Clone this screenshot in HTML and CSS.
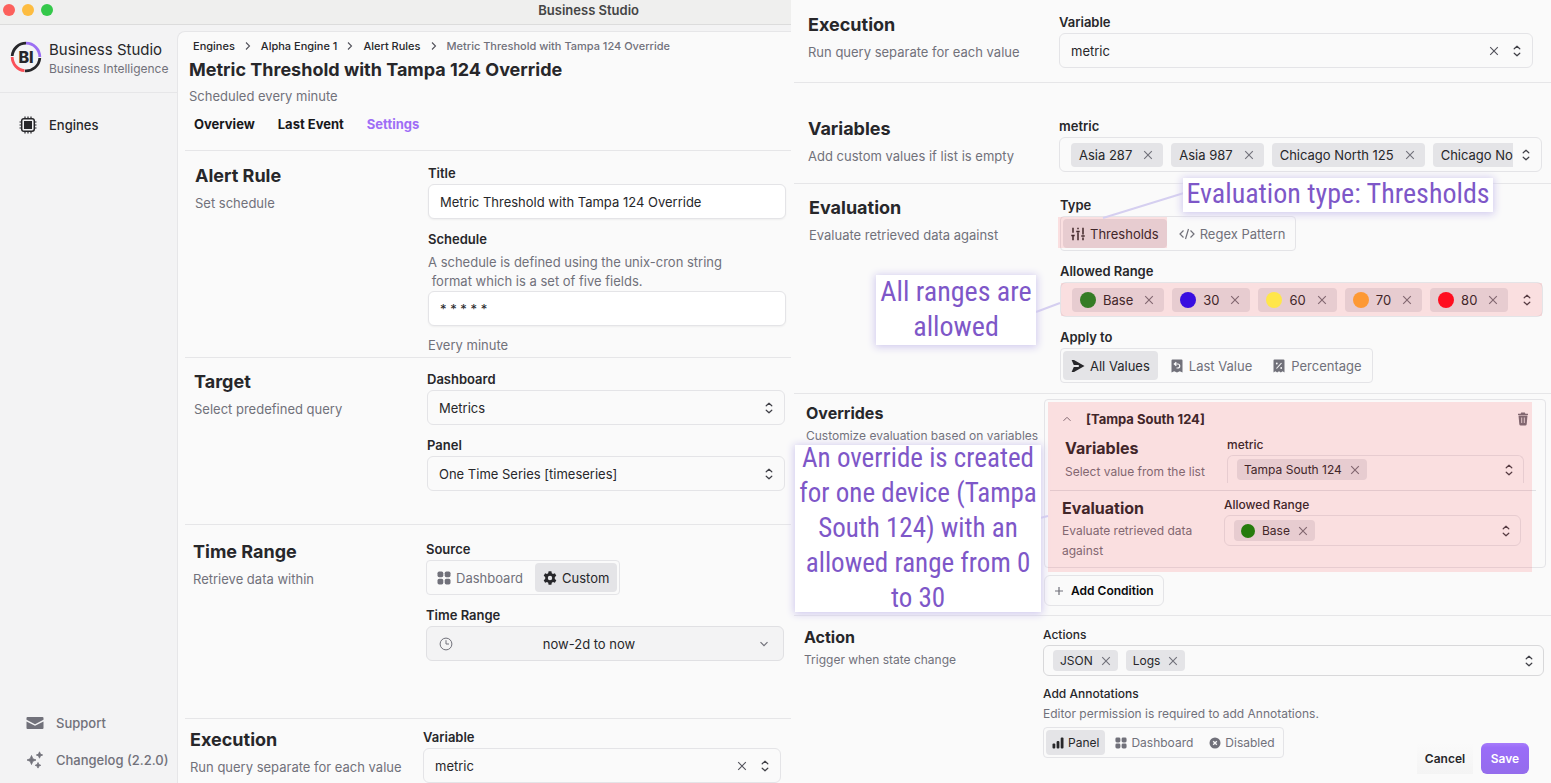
FILE: index.html
```html
<!DOCTYPE html>
<html lang="en">
<head>
<meta charset="utf-8">
<title>Business Studio</title>
<link rel="stylesheet" href="styles.css">
</head>
<body>
<svg class="defs" aria-hidden="true">
  <symbol id="updown" viewBox="0 0 10 14"><path d="M2.200 4.800 5 2.200l2.800 2.600M2.200 9.200 5 11.800l2.800-2.600" fill="none" stroke="#3f3f46" stroke-width="1.200" stroke-linecap="round" stroke-linejoin="round"/></symbol>
  <symbol id="x" viewBox="0 0 10 10"><path d="M1.200 1.200l7.600 7.600M8.800 1.200L1.200 8.800" fill="none" stroke="currentColor" stroke-width="1.100"/></symbol>
  <symbol id="right" viewBox="0 0 8 10"><path d="M2 1.500 5.500 5 2 8.500" fill="none" stroke="#52525b" stroke-width="1.100"/></symbol>
  <symbol id="grid" viewBox="0 0 14 14"><g fill="currentColor"><rect x=".5" y=".5" width="5.800" height="5.800" rx="1.700"/><rect x="7.700" y=".5" width="5.800" height="5.800" rx="1.700"/><rect x=".5" y="7.700" width="5.800" height="5.800" rx="1.700"/><rect x="7.700" y="7.700" width="5.800" height="5.800" rx="1.700"/></g></symbol>
</svg>
<div class="page">
  <div class="left">
    <header class="titlebar">
      <span class="dot red"></span><span class="dot amber"></span><span class="dot green"></span>
      <strong class="window-title">Business Studio</strong>
    </header>
    <div class="app">
      <aside class="sidebar">
        <div class="brand">
          <svg class="logo" viewBox="0 0 32 32"><g fill="none" stroke-width="2.800"><path d="M16 2.200A13.800 13.800 0 0 1 29.800 16" stroke="#9b6ef3"/><path d="M29.800 17A13.800 13.800 0 0 1 15 29.800" stroke="#27272a"/><path d="M14.500 29.700A13.800 13.800 0 0 1 2.200 16" stroke="#fb5058"/><path d="M2.200 15A13.800 13.800 0 0 1 16 2.200" stroke="#27272a"/></g><text x="16" y="22" text-anchor="middle" class="logo-text">BI</text></svg>
          <div class="brand-text"><div class="brand-name">Business Studio</div><div class="brand-sub">Business Intelligence</div></div>
        </div>
        <nav class="nav">
          <a href="#engines"><svg class="i18" viewBox="0 0 18 18"><path d="M6 .5V3M9 .5V3M12 .5V3M6 15v2.500M9 15v2.500M12 15v2.500M.5 6H3M.5 9H3M.5 12H3M15 6h2.500M15 9h2.500M15 12h2.500" stroke="#27272a" stroke-width="1.200"/><rect x="2.700" y="2.700" width="12.600" height="12.600" rx="2.200" fill="none" stroke="#27272a" stroke-width="1.500"/><rect x="5" y="5" width="8" height="8" fill="#27272a"/></svg>Engines</a>
        </nav>
        <nav class="nav-bottom">
          <a href="#support"><svg class="i18" viewBox="0 0 18 18"><path d="M1.500 3h15a1 1 0 0 1 1 1v1.800L9 10.200.5 5.800V4a1 1 0 0 1 1-1z" fill="#71717a"/><path d="M.5 7.400 9 11.800l8.500-4.400V14a1 1 0 0 1-1 1h-15a1 1 0 0 1-1-1z" fill="#71717a"/></svg>Support</a>
          <a href="#changelog"><svg class="i18" viewBox="0 0 18 18"><g fill="#71717a" stroke="#71717a" stroke-linejoin="round" stroke-width=".8"><path d="M5.500 4.500l1.300 3.200L10 9l-3.200 1.300-1.300 3.200-1.300-3.200L1 9l3.200-1.300z"/><path d="M13.500.8l.9 2.300 2.300.9-2.300.9-.9 2.300-.9-2.300-2.300-.9 2.300-.9zM12 11.500l.8 2 2 .8-2 .8-.8 2-.8-2-2-.8 2-.8z"/></g></svg>Changelog (2.2.0)</a>
        </nav>
      </aside>
      <main class="main">
        <div class="head">
          <nav class="crumbs" aria-label="Breadcrumb"><a href="#e">Engines</a><svg class="sep"><use href="#right"/></svg><a href="#a">Alpha Engine 1</a><svg class="sep"><use href="#right"/></svg><a href="#r">Alert Rules</a><svg class="sep"><use href="#right"/></svg><span>Metric Threshold with Tampa 124 Override</span></nav>
          <h1>Metric Threshold with Tampa 124 Override</h1>
          <p class="sub">Scheduled every minute</p>
          <nav class="tabs"><a href="#o">Overview</a><a href="#l">Last Event</a><a href="#s" class="active">Settings</a></nav>
        </div>
        <section class="row alert">
          <div><h2>Alert Rule</h2><p class="sub">Set schedule</p></div>
          <div>
            <label for="title">Title</label>
            <input id="title" class="box text" value="Metric Threshold with Tampa 124 Override">
            <label for="cron" class="next">Schedule</label>
            <p class="hint">A schedule is defined using the unix-cron string<br>&nbsp;format which is a set of five fields.</p>
            <input id="cron" class="box text" value="* * * * *">
            <p class="note">Every minute</p>
          </div>
        </section>
        <section class="row target">
          <div><h2>Target</h2><p class="sub">Select predefined query</p></div>
          <div>
            <label for="dash">Dashboard</label>
            <div class="box"><select id="dash"><option>Metrics</option></select><svg class="ud"><use href="#updown"/></svg></div>
            <label for="panel" class="next">Panel</label>
            <div class="box"><select id="panel"><option>One Time Series [timeseries]</option></select><svg class="ud"><use href="#updown"/></svg></div>
          </div>
        </section>
        <section class="row time">
          <div><h2>Time Range</h2><p class="sub">Retrieve data within</p></div>
          <div>
            <span class="label" id="src">Source</span>
            <div class="seg" role="group" aria-labelledby="src"><button><svg class="i14"><use href="#grid"/></svg>Dashboard</button><button class="on"><svg class="i14" viewBox="0 0 14 14"><path fill="currentColor" fill-rule="evenodd" d="M5.600.3h2.800l.4 1.900 1.200.7 1.900-.6 1.400 2.400-1.500 1.300v2l1.500 1.300-1.400 2.400-1.900-.6-1.200.7-.4 1.900H5.600l-.4-1.900-1.200-.7-1.900.6L.7 9.300 2.200 8V6L.7 4.700l1.400-2.400 1.900.6 1.200-.7zM7 4.800a2.200 2.200 0 1 0 0 4.400 2.200 2.200 0 0 0 0-4.400z"/></svg>Custom</button></div>
            <label for="range" class="next">Time Range</label>
            <button id="range" class="box range"><svg class="i14" viewBox="0 0 14 14"><circle cx="7" cy="7" r="5.900" fill="none" stroke="#71717a"/><path d="M7 3.200V7h3" fill="none" stroke="#71717a"/></svg><span>now-2d to now</span><svg class="i10" viewBox="0 0 10 10"><path d="M1.500 3.200 5 6.700l3.500-3.500" fill="none" stroke="#71717a" stroke-width="1.200"/></svg></button>
          </div>
        </section>
        <section class="row exec">
          <div><h2>Execution</h2><p class="sub">Run query separate for each value</p></div>
          <div>
            <label for="var1">Variable</label>
            <div class="box"><select id="var1"><option>metric</option></select><button class="clear" aria-label="Clear"><svg><use href="#x"/></svg></button><svg class="ud"><use href="#updown"/></svg></div>
          </div>
        </section>
      </main>
    </div>
  </div>

  <div class="right">
    <section class="row r-exec">
      <div><h2>Execution</h2><p class="sub">Run query separate for each value</p></div>
      <div>
        <label for="var2">Variable</label>
        <div class="box"><select id="var2"><option>metric</option></select><button class="clear" aria-label="Clear"><svg><use href="#x"/></svg></button><svg class="ud"><use href="#updown"/></svg></div>
      </div>
    </section>
    <section class="row r-vars">
      <div><h2>Variables</h2><p class="sub">Add custom values if list is empty</p></div>
      <div>
        <span class="label">metric</span>
        <div class="box"><div class="chips"><span class="chip">Asia 287<button aria-label="Remove"><svg><use href="#x"/></svg></button></span><span class="chip">Asia 987<button aria-label="Remove"><svg><use href="#x"/></svg></button></span><span class="chip">Chicago North 125<button aria-label="Remove"><svg><use href="#x"/></svg></button></span><span class="chip last">Chicago No</span></div><svg class="ud"><use href="#updown"/></svg></div>
      </div>
    </section>
    <section class="row r-eval">
      <div><h2>Evaluation</h2><p class="sub">Evaluate retrieved data against</p></div>
      <div>
        <span class="label" id="type">Type</span>
        <div class="seg" role="group" aria-labelledby="type"><button class="on marked"><svg class="i14" viewBox="0 0 14 14"><path d="M2 .8v5M2 8.500v4.700M7 .8v1.500M7 5.500v7.700M12 .8v6.700M12 10.500v2.700M.3 8.500h3.400M5.300 4.500h3.400M10.300 9h3.400" fill="none" stroke="currentColor" stroke-width="1.500"/></svg>Thresholds</button><button><svg class="i16" viewBox="0 0 16 14"><path d="M4.500 3.500 1 7l3.500 3.500M11.500 3.500 15 7l-3.500 3.500M9.500 2 6.500 12" fill="none" stroke="currentColor" stroke-width="1.200"/></svg>Regex Pattern</button></div>
        <span class="label next">Allowed Range</span>
        <div class="box marked"><div class="chips"><span class="chip"><i class="c-green"></i>Base<button aria-label="Remove"><svg><use href="#x"/></svg></button></span><span class="chip"><i class="c-blue"></i>30<button aria-label="Remove"><svg><use href="#x"/></svg></button></span><span class="chip"><i class="c-yellow"></i>60<button aria-label="Remove"><svg><use href="#x"/></svg></button></span><span class="chip"><i class="c-orange"></i>70<button aria-label="Remove"><svg><use href="#x"/></svg></button></span><span class="chip"><i class="c-red"></i>80<button aria-label="Remove"><svg><use href="#x"/></svg></button></span></div><svg class="ud"><use href="#updown"/></svg></div>
        <span class="label next" id="apply">Apply to</span>
        <div class="seg" role="group" aria-labelledby="apply"><button class="on"><svg class="i14" viewBox="0 0 14 14"><path fill="currentColor" d="M.6.9 3 .9 13.500 7 3 13.100H.6L2.800 8h5V6h-5z"/></svg>All Values</button><button><svg class="i14" viewBox="0 0 14 14"><path fill="currentColor" d="M2.500.5h9a1 1 0 0 1 1 1v12l-2.700-1.300L7 13.500l-2.800-1.300-2.700 1.300v-12a1 1 0 0 1 1-1z"/><path d="M6.300 3.200 4.300 5l2 1.800M4.500 5h3.200c2.700 0 2.700 4 0 4H6.500" fill="none" stroke="#fafafa" stroke-width="1.200"/></svg>Last Value</button><button><svg class="i14" viewBox="0 0 14 14"><path fill="currentColor" d="M2.500.5h9a1 1 0 0 1 1 1v12l-1.900-1.200-1.800 1.200L7 12.300l-1.800 1.200-1.800-1.200-1.900 1.200v-12a1 1 0 0 1 1-1z"/><path d="m4.500 9.500 5-5.500" stroke="#fafafa" stroke-width="1.100"/><circle cx="4.800" cy="4.500" r=".9" fill="#fafafa"/><circle cx="9.200" cy="9" r=".9" fill="#fafafa"/></svg>Percentage</button></div>
      </div>
    </section>
    <section class="row small r-over">
      <div><h2>Overrides</h2><p class="sub">Customize evaluation based on variables</p></div>
      <div>
        <div class="card">
          <div class="card-head"><svg class="i10" viewBox="0 0 10 10"><path d="M1.500 6.800 5 3.300l3.500 3.500" fill="none" stroke="#71717a"/></svg><strong>[Tampa South 124]</strong><button class="trash" aria-label="Delete"><svg viewBox="0 0 12 14"><path fill="#71717a" d="M4.200.5h3.600l.6 1.200h2.600V3H1V1.700h2.600zM1.500 3.600h9l-.8 8.600a1.500 1.500 0 0 1-1.500 1.300H3.800a1.500 1.500 0 0 1-1.500-1.300z"/><path d="M4.700 5.500v5.500M7.300 5.500v5.500" stroke="#fafafa" stroke-width=".8"/></svg></button></div>
          <div class="sub-row first">
            <div><h3>Variables</h3><p class="sub">Select value from the list</p></div>
            <div><span class="label">metric</span><div class="box open"><div class="chips"><span class="chip">Tampa South 124<button aria-label="Remove"><svg><use href="#x"/></svg></button></span></div><svg class="ud"><use href="#updown"/></svg></div></div>
          </div>
          <div class="sub-row second">
            <div><h3>Evaluation</h3><p class="sub">Evaluate retrieved data against</p></div>
            <div><span class="label">Allowed Range</span><div class="box"><div class="chips"><span class="chip"><i class="c-green2"></i>Base<button aria-label="Remove"><svg><use href="#x"/></svg></button></span></div><svg class="ud"><use href="#updown"/></svg></div></div>
          </div>
        </div>
        <button class="add"><svg class="i10" viewBox="0 0 10 10"><path d="M5 1v8M1 5h8" stroke="#71717a" stroke-width="1.200"/></svg>Add Condition</button>
      </div>
    </section>
    <section class="row small r-action">
      <div><h2>Action</h2><p class="sub">Trigger when state change</p></div>
      <div>
        <span class="label">Actions</span>
        <div class="box dark"><div class="chips"><span class="chip">JSON<button aria-label="Remove"><svg><use href="#x"/></svg></button></span><span class="chip">Logs<button aria-label="Remove"><svg><use href="#x"/></svg></button></span></div><svg class="ud"><use href="#updown"/></svg></div>
        <span class="label next" id="ann">Add Annotations</span>
        <p class="hint">Editor permission is required to add Annotations.</p>
        <div class="seg" role="group" aria-labelledby="ann"><button class="on"><svg class="i12" viewBox="0 0 12 12"><g fill="currentColor"><rect x=".5" y="6.500" width="2.800" height="5" rx="1"/><rect x="4.600" y="4" width="2.800" height="7.500" rx="1"/><rect x="8.700" y=".5" width="2.800" height="11" rx="1"/></g></svg>Panel</button><button><svg class="i12"><use href="#grid"/></svg>Dashboard</button><button><svg class="i12" viewBox="0 0 12 12"><circle cx="6" cy="6" r="5.500" fill="currentColor"/><path d="m4.200 4.200 3.600 3.600M7.800 4.200 4.200 7.800" stroke="#fafafa" stroke-width="1.300"/></svg>Disabled</button></div>
      </div>
    </section>
    <div class="actions"><button class="cancel">Cancel</button><button class="save">Save</button></div>
  </div>

  <svg class="lines" aria-hidden="true"><path d="M1103 218 1184 193M1036 312l24-9M1040 518l8-2"/></svg>
  <div class="callout one">Evaluation type: Thresholds</div>
  <div class="callout two">All ranges are<br>allowed</div>
  <div class="callout three">An override is created<br>for one device (Tampa<br>South 124) with an<br>allowed range from 0<br>to 30</div>
</div>
</body>
</html>
```

FILE: styles.css
```css
* { box-sizing: border-box; }
body { margin: 0; background: #fafafa; color: #27272a; font-family: Inter, "Liberation Sans", sans-serif; font-size: 13px; }
h1, h2, h3, p { margin: 0; }
a { color: inherit; text-decoration: none; }
button, input, select { font: inherit; color: inherit; }
button { border: 0; background: none; padding: 0; }
.defs { position: absolute; width: 0; height: 0; }

.page { position: relative; display: grid; grid-template-columns: 51% 49%; min-height: 100vh; overflow: hidden; }
.left { display: flex; flex-direction: column; background: #f3f3f4; }

.titlebar { display: flex; align-items: center; height: 25px; gap: 7px; padding: 0 152px 5px 3px; background: #efefee; border-bottom: 1px solid #dcdcdc; }
.dot { width: 12px; height: 12px; border-radius: 50%; }
.red { background: #fc605c; }
.amber { background: #fdbc40; }
.green { background: #34c84a; }
.window-title { margin-left: auto; font-size: 13px; font-weight: 600; color: #454545; }

.app { flex: 1; display: flex; }
.sidebar { width: 177px; display: flex; flex-direction: column; font-weight: 500; }
.brand { display: flex; align-items: center; gap: 7px; height: 68px; padding: 0 0 4px 10px; border-bottom: 1px solid #e6e6e8; white-space: nowrap; }
.brand-text { padding-top: 4px; font-weight: 400; }
.logo { width: 32px; height: 32px; flex: none; }
.logo-text { font: 800 16px Inter, sans-serif; fill: #27272a; }
.brand-name { font-size: 15px; line-height: 20px; }
.brand-sub { font-size: 12px; line-height: 18px; color: #71717a; }
.nav { padding: 22px 0 0 19px; }
.nav a, .nav-bottom a { display: flex; align-items: center; gap: 12px; height: 20px; white-space: nowrap; }
.nav-bottom { margin-top: auto; padding: 0 0 13px 26px; display: grid; gap: 17px; color: #71717a; }
.i18 { width: 18px; height: 18px; flex: none; }
.i16 { width: 16px; height: 14px; }
.i14 { width: 14px; height: 14px; }
.i12 { width: 12px; height: 12px; }
.i10 { width: 10px; height: 10px; }

.main { flex: 1; min-width: 0; margin-top: 6px; background: #fafafa; border: 1px solid #e6e6e8; border-width: 1px 0 0 1px; border-radius: 8px 0 0 0; padding-left: 7px; }
.head { padding-left: 4px; height: 118px; }
.crumbs { display: flex; align-items: center; height: 28px; padding-left: 4px; gap: 9px; font-size: 11px; font-weight: 500; }
.crumbs span { color: #71717a; }
.sep { width: 8px; height: 10px; }
h1 { font-size: 18px; line-height: 20px; font-weight: 700; }
.head .sub { line-height: 32px; }
.tabs { display: flex; gap: 23px; padding-left: 5px; font-size: 13px; line-height: 25px; font-weight: 700; color: #18181b; }
.tabs .active { color: #9f6ef6; }

.row { display: grid; grid-template-columns: 233px 1fr; border-top: 1px solid #e6e6e8; }
.row > div { min-width: 0; }
h2 { font-size: 18px; line-height: 28px; font-weight: 700; }
.sub { color: #71717a; line-height: 26px; }
label, .label { display: block; line-height: 22px; font-weight: 600; }
.next { margin-top: 9px; }
.hint { color: #71717a; line-height: 19px; padding: 3px 0 0; }
.note { color: #71717a; line-height: 20px; padding-top: 9px; }
.box { display: flex; align-items: center; width: 100%; height: 35px; padding: 0 10px 0 11px; border: 1px solid #e4e4e7; border-radius: 6px; }
.box.text { background: #fff; box-shadow: 0 1px 2px #0000000d; outline: 0; }
.box.dark { border-color: #d8d8da; }
.box select { flex: 1; min-width: 0; border: 0; background: none; appearance: none; padding: 0; outline: 0; }
.ud { width: 10px; height: 14px; flex: none; margin-left: 8px; }
.clear { width: 10px; height: 10px; margin-right: 5px; color: #52525b; }
.clear svg, .chip svg { display: block; width: 10px; height: 10px; }
.range { background: #f3f3f4; border-color: #e0e0e3; justify-content: space-between; padding-left: 12px; }
.range span { padding-right: 34px; }
.range .i10 { margin-right: 4px; }

.alert { padding: 11px 5px 2px 10px; }
.target { padding: 10px 6px 33px 9px; }
.time { padding: 13px 7px 57px 8px; }
.exec { padding: 7px 10px 0 5px; }

.seg { display: inline-flex; gap: 4px; height: 35px; padding: 2px; border: 1px solid #e4e4e7; border-radius: 4px; color: #71717a; vertical-align: top; }
.seg button { position: relative; display: flex; align-items: center; gap: 5px; padding: 0 8px; border-radius: 4px; white-space: nowrap; }
.seg .on { background: #e4e4e7; color: #27272a; }

.chips { flex: 1; min-width: 0; display: flex; gap: 8px; overflow: hidden; }
.chip { flex: none; display: flex; align-items: center; height: 24px; padding: 0 10px 0 8px; border-radius: 4px; background: #e4e4e7; }
.chip.last { flex: 1; padding-right: 0; border-radius: 4px 0 0 4px; white-space: nowrap; }
.chip button { margin-left: 11px; color: #71717a; }
.chip i { width: 16px; height: 16px; margin-right: 7px; border-radius: 50%; position: relative; z-index: 2; }
.c-green { background: #357c25; }
.c-green2 { background: #267c0d; }
.c-blue { background: #380ee0; }
.c-yellow { background: #ffe64a; }
.c-orange { background: #fd9934; }
.c-red { background: #ff0e20; }
.marked { position: relative; }
.marked::after, .card::after { content: ""; position: absolute; inset: 0; background: rgba(255, 30, 45, .12); pointer-events: none; }
.seg .marked::after { inset: -2px 0 0 -5px; }

.right { position: relative; padding-left: 3px; }
.right .row { grid-template-columns: 251px 1fr; }
.right .r-exec { padding: 10px 18px 14px 14px; border-top-color: transparent; }
.r-vars { padding: 32px 9px 11px 14px; }
.r-eval { padding: 10px 8px 10px 15px; }

.small h2 { font-size: 16px; line-height: 24px; }
.small h3 { font-size: 16px; line-height: 26px; }
.small .sub, .small .label, .small .hint, .small .seg, .small .box { font-size: 12px; }
.small .label { line-height: 20px; font-weight: 500; }
.small .sub { line-height: 22px; }
.small .next { margin-top: 8px; }
.small .hint { padding: 0 0 4px; }
.small .box { height: 31px; padding: 0 9px; }
.small .chip { height: 21px; padding: 0 7px; }
.small .chip button { margin-left: 8px; }
.small .chip i { width: 14px; height: 14px; }
.small .seg { height: 31px; }
.small .seg button { gap: 4px; padding: 0 6px; }
.right .r-over { grid-template-columns: 238px 1fr; padding: 5px 5px 9px 12px; }
.right .r-over > div:first-child { padding-top: 2px; white-space: nowrap; }
.card { position: relative; height: 169px; border: 1px solid #e4e4e7; border-radius: 4px; }
.card::after { inset: 2px 13px -5px 3px; }
.card-head { display: flex; align-items: center; height: 35px; padding: 3px 16px 0 17px; font-size: 13px; }
.card-head strong { margin-left: 14px; font-weight: 700; }
.trash { width: 12px; height: 14px; margin-left: auto; }
.trash svg { display: block; width: 12px; height: 14px; }
.sub-row { display: grid; grid-template-columns: 162px 1fr; }
.first { padding: 0 21px 7px 20px; }
.second { margin: 0 9px 0 5px; padding: 4px 15px 0 12px; border-top: 1px solid #e0e0e3; }
.second .sub { padding-right: 20px; line-height: 20px; }
.small .open { height: 28px; border-bottom: 0; border-radius: 6px 6px 0 0; }
.add { display: flex; align-items: center; gap: 7px; height: 31px; margin-top: 7px; padding: 0 9px; border: 1px solid #e4e4e7; border-radius: 6px; font-size: 12px; font-weight: 600; color: #09090b; }
.right .r-action { grid-template-columns: 239px 1fr; padding: 9px 7px 0 10px; }
.actions { position: absolute; right: 22px; bottom: 9px; display: flex; font-size: 12px; font-weight: 600; }
.cancel { width: 56px; margin-right: 8px; background: linear-gradient(#fafafa, #f4f4f4); }
.save { width: 48px; height: 31px; border-radius: 6px; color: #fff; background: linear-gradient(#a67cfb, #9a6cf8 15%, #946cec); }

.lines { position: absolute; inset: 0; width: 100%; height: 100%; pointer-events: none; fill: none; stroke: #d5cff0; stroke-width: 2; }
.callout { position: absolute; display: grid; align-content: center; background: #fff; color: #7e57c8; text-align: center; font-family: "Roboto Condensed", "Liberation Sans Narrow", "Open Sans Condensed", "DejaVu Sans Condensed", sans-serif; font-size: 28px; line-height: 35px; white-space: nowrap; box-shadow: 0 1px 8px 1px #cfc8ee; z-index: 5; }
.one { left: 1183px; top: 178px; width: 310px; height: 34px; padding-bottom: 4px; }
.two { left: 876px; top: 275px; width: 160px; height: 70px; padding-bottom: 2px; }
.three { left: 795px; top: 445px; width: 246px; height: 167px; font-size: 27px; }
```
